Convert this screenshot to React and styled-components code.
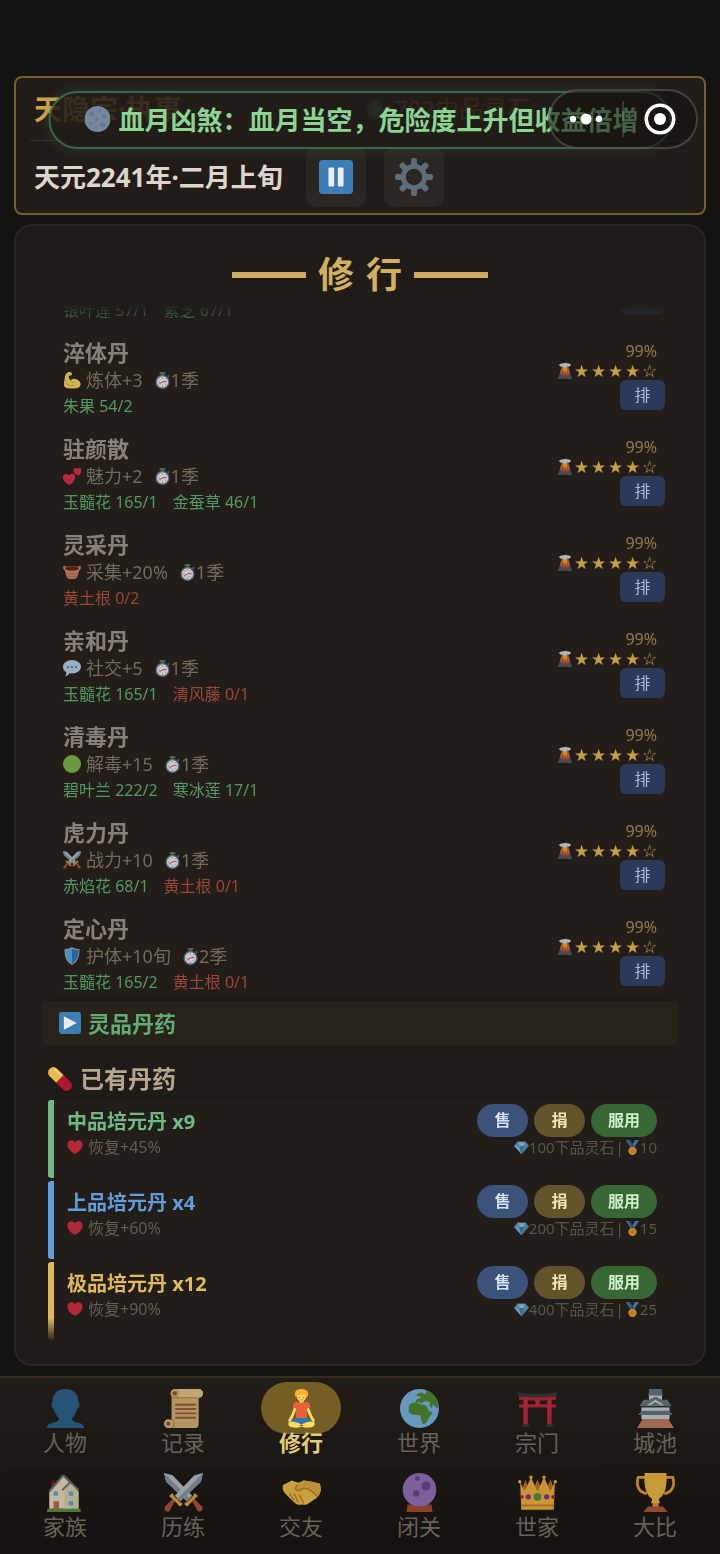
import React, { useLayoutEffect, useRef } from 'react';
import styled, { createGlobalStyle, css } from 'styled-components';

const GlobalStyle = createGlobalStyle`
  *, *::before, *::after { box-sizing: border-box; }
  html, body { margin: 0; background: #151311; }
  body, button {
    font-family: "Noto Sans", "Noto Sans CJK SC", sans-serif;
  }
  button { margin: 0; padding: 0; border: 0; cursor: pointer; }
  h1, h2, h3, p, ul { margin: 0; padding: 0; font-weight: inherit; }
  ul { list-style: none; }
`;

/* ---------- icons ---------- */

const Svg = styled.svg`
  display: block;
  flex: none;
  width: ${(p) => p.$size}px;
  height: ${(p) => p.$size}px;
  opacity: ${(p) => p.$dim || 1};
`;

const drawings = {
  moon: (
    <>
      <circle cx="18" cy="18" r="18" fill="#7688a0" />
      <g fill="#66788f">
        <circle cx="10" cy="11" r="3.5" /><circle cx="21" cy="7" r="2" /><circle cx="27" cy="14" r="3" />
        <circle cx="17" cy="19" r="2.6" /><circle cx="9" cy="24" r="2.2" /><circle cx="25" cy="26" r="3.6" /><circle cx="16" cy="30" r="1.8" />
      </g>
    </>
  ),
  gem: (
    <>
      <path d="M18 1c5 5 14 11 14 20a14 14 0 0 1-28 0C4 12 13 6 18 1z" fill="#2f7a4c" />
      <path d="M18 7l8 13-8 11-8-11z" fill="#4da56c" />
    </>
  ),
  pause: (
    <>
      <rect width="36" height="36" rx="4" fill="#3b7fb6" />
      <rect x="10" y="8" width="6" height="20" rx="1" fill="#ececec" />
      <rect x="20" y="8" width="6" height="20" rx="1" fill="#ececec" />
    </>
  ),
  play: (
    <>
      <rect width="36" height="36" rx="4" fill="#3b7fb6" />
      <path d="M8 7l21 11L8 29z" fill="#ececec" />
    </>
  ),
  gear: (
    <g fill="#5d6d79">
      <path fillRule="evenodd" d="M18 5.5a12.5 12.5 0 1 0 0 25 12.5 12.5 0 0 0 0-25zm0 4.700a7.800 7.800 0 1 1 0 15.600 7.800 7.800 0 0 1 0-15.600z" />
      {[0, 45, 90, 135, 180, 225, 270, 315].map((a) => (
        <rect key={a} x="15.200" y="0" width="5.600" height="8" rx="2" transform={`rotate(${a} 18 18)`} />
      ))}
    </g>
  ),
  muscle: (
    <>
      <path d="M3 18C4 9 6 3 12 2c4-.5 7 2 6 5-1 2-4 3-6 2-1 3 0 7 3 10 3-4 8-5 13-2 5 2 8 7 7 11-1 5-6 7-13 7-8 0-17 0-19-4C1 28 2 23 3 18z" fill="#ffdc5d" />
      <path d="M15 19c2 3 4 4 7 4M7 25c4 4 9 5 14 4" fill="none" stroke="#d99e35" strokeWidth="2" strokeLinecap="round" />
    </>
  ),
  hearts: (
    <g fill="#dd2e44">
      <path d="M13 36C4 32-1 26 0 19c1-6 8-7 12-2 3-5 11-5 12 1 1 7-4 14-11 18z" />
      <path d="M31 17c-6-2-11-6-10-11 1-5 6-5 8-2 2-4 8-3 8 2 0 4-2 8-6 11z" />
    </g>
  ),
  basket: (
    <>
      <path d="M3 13C-1 9 1 5 5 7M33 13c4-4 2-8-2-6" stroke="#c1694f" strokeWidth="2.500" fill="none" />
      <path d="M3 13h30l-4 14c-1 4-4 5-11 5S8 31 7 27z" fill="#d9866a" />
      <path d="M2 8c8-2 24-2 32 0v6c-7 5-25 5-32 0z" fill="#d9866a" />
      <ellipse cx="18" cy="11" rx="14" ry="4.500" fill="#662113" />
      <path d="M5 20c8 3 18 3 26 0M7 26c7 3 15 3 22 0" stroke="#b0644c" strokeWidth="1.500" fill="none" />
    </>
  ),
  bubble: (
    <>
      <path d="M18 2c10 0 18 6 18 13.500S28 29 18 29c-2 0-4 0-5-.5C11 32 7 34 4 35c2-3 3-6 2-9-4-2-6-6-6-10.500C0 8 8 2 18 2z" fill="#b4d5ee" />
      <g fill="#3b7395"><circle cx="10" cy="16" r="2.200" /><circle cx="18" cy="16" r="2.200" /><circle cx="26" cy="16" r="2.200" /></g>
    </>
  ),
  green: <circle cx="18" cy="18" r="18" fill="#7cb74e" />,
  swords: (
    <>
      {['', 'matrix(-1 0 0 1 36 0)'].map((t) => (
        <g key={t} transform={t || undefined}>
          <path d="M0 0l8 2 18 19-5 5L2 8z" fill="#b8c4cf" />
          <path d="M0 0l24 24-3 2L2 8z" fill="#8899a6" />
          <path d="M26 26l2-2 7 7c2 3-2 6-4 4z" fill="#a9573a" />
          <path d="M20 30c-2-1-1-3 1-3l6-6c0-2 2-3 3-1 2 1 1 2-1 3l-6 6c0 2-2 2-3 1z" fill="#f0a03a" />
        </g>
      ))}
    </>
  ),
  shield: (
    <>
      <path d="M18 0c5 3 10 4 15 4 0 14-2 25-15 32C5 29 3 18 3 4c5 0 10-1 15-4z" fill="#98aab6" />
      <path d="M18 3v30C7 26 5 18 5 6c5 0 9-1 13-3z" fill="#55acee" />
      <path d="M18 3v30c11-7 13-15 13-27-5 0-9-1-13-3z" fill="#2b78b8" />
    </>
  ),
  watch: (
    <>
      <rect x="12" y="0" width="12" height="4" rx="1" fill="#557385" />
      <rect x="15" y="3" width="6" height="4" fill="#66757f" />
      <path d="M29 7l3 3" stroke="#557385" strokeWidth="4" />
      <circle cx="18" cy="21" r="15" fill="#66757f" />
      <circle cx="18" cy="21" r="12" fill="#f5f8fa" />
      <path d="M18 11v3M18 28v3M8 21h3M25 21h3M11 14l2 2M25 14l-2 2M11 28l2-2M25 28l-2-2" stroke="#66757f" strokeWidth="1.500" />
      <path d="M11 25l7-4 7-1" stroke="#dd2e44" strokeWidth="2" fill="none" />
    </>
  ),
  volcano: (
    <>
      <path d="M11 8h14l9 28H2z" fill="#57505c" />
      <path d="M11 8h14l4 13-3 8-2-8-1 10-5-8-5 8-1-10-3 7-2-7z" fill="#d8652f" />
      <path d="M14 8h8l1 12-3-3-1 5-2-6-3 4z" fill="#ffac33" />
      <path d="M5 4c1-3 5-3 8-3 3-1 8-1 11 0 3 0 6 0 7 3 0 3-3 5-6 4-4 2-10 2-14 0-3 1-6-1-6-4z" fill="#d6dde2" />
    </>
  ),
  pill: (
    <g transform="rotate(45 18 18)">
      <path d="M18 10H4a8 8 0 0 0 0 16h14z" fill="#ffcc4d" />
      <path d="M18 10h14a8 8 0 0 1 0 16H18z" fill="#be1931" />
      <path d="M2 14c3-1 8-1 13-1" stroke="#ffe8b6" strokeWidth="2" fill="none" />
    </g>
  ),
  heart: <path d="M18 34C8 27 0 20 1 11 2 2 14 0 18 8c4-8 16-6 17 3 1 9-7 16-17 23z" fill="#d92c42" />,
  diamond: (
    <>
      <path d="M8 4h20l8 10-18 20L0 14z" fill="#5ba8dc" />
      <path d="M8 4l4 10h12l4-10zM0 14h12l6 20z" fill="#8ccaf7" />
      <path d="M12 14h12l-6 20z" fill="#3f8cc8" />
      <path d="M12 14L18 4l6 10z" fill="#bddff6" />
    </>
  ),
  medal: (
    <>
      <path d="M2 0h10l9 15-6 4zM34 0H24l-9 15 6 4z" fill="#428fc7" />
      <path d="M7 0h5l8 14-3 3z" fill="#245d86" />
      <circle cx="18" cy="26" r="10" fill="#ffac33" />
      <circle cx="18" cy="26" r="5" fill="#e6982b" />
    </>
  ),
  person: (
    <path d="M18 0c8 0 12 5 12 12l1 2c0 2-1 4-2 4-1 4-3 7-5 9 0 3 2 3 5 4 4 1 6 2 6 5H1c0-3 2-4 6-5 3-1 5-1 5-4-2-2-4-5-5-9-1 0-2-2-2-4l1-2C6 5 10 0 18 0z" fill="#28628e" />
  ),
  scroll: (
    <>
      <path d="M10 0h22a4 4 0 0 1 0 8v24c0 3-1 4-4 4H4V29h3V4c0-3 1-4 3-4z" fill="#dbb574" />
      <path d="M10 0h22a4 4 0 0 1 4 4 4 4 0 0 1-4 4H13c2-3 1-7-3-8z" fill="#e7c98d" />
      <circle cx="10" cy="4" r="4" fill="#d8af6a" /><circle cx="10" cy="4" r="2" fill="#914f40" />
      <circle cx="4" cy="32" r="4" fill="#e1bf80" /><circle cx="4" cy="32" r="2" fill="#914f40" />
      <path d="M8 8h23M8 28c2 2 2 6-1 8" stroke="#ad844b" strokeWidth="1" fill="none" />
      <path d="M11 14.500h18M11 18.500h18M11 22.500h18M11 26.500h18" stroke="#9d5b43" strokeWidth="1.800" strokeLinecap="round" />
    </>
  ),
  lotus: (
    <>
      <path d="M13 14c-1 5-2 9-6 15M23 14c1 5 2 9 6 15" stroke="#ffdc5d" strokeWidth="2.600" strokeLinecap="round" fill="none" />
      <path d="M16 9h4v5h-4z" fill="#f3c544" />
      <path d="M13 12c3 1 7 1 10 0 2 0 3 2 3 5l-3 1v9H13v-9l-3-1c0-3 1-5 3-5z" fill="#e9603f" />
      <path d="M12 27h12l4 3-4 4-6-2-6 2-4-4z" fill="#2b78b8" />
      <path d="M8 30c4 0 7 1 12 4-3 2-8 2-12 1-3-1-3-5 0-5zM28 30c-4 0-7 1-12 4 3 2 8 2 12 1 3-1 3-5 0-5z" fill="#ffdc5d" />
      <ellipse cx="18" cy="6" rx="4.500" ry="5.500" fill="#ffdc5d" />
      <path d="M12 6c-1-4 2-6 6-6s7 2 6 6l-1 2c-1-3-3-3-5-3s-4 0-5 3z" fill="#ffac33" />
      <path d="M15 7.500c.5.600 1.500.6 2 0M19 7.500c.5.600 1.500.6 2 0M16.500 9.500c1 .8 2 .8 3 0" stroke="#a0601e" strokeWidth=".8" fill="none" />
    </>
  ),
  globe: (
    <>
      <circle cx="18" cy="18" r="18" fill="#78b9e9" />
      <path d="M24 1c6 2 10 7 11 12 1 3 0 5-1 5l-3-4-2 4-2-3 1-3-5-1-3 2-4-1-2 1 1-3 4-2-1-2 3-2 3 1z" fill="#4c8a2c" />
      <path d="M9 14c3-2 7-2 9 0l6 1 3 6h3c-1 4-4 5-4 7-1 3-3 5-5 4-2-3-1-6-3-8-4 0-9 0-10-4 0-2 0-5 1-6z" fill="#4c8a2c" />
      <path d="M15 5l4-2 3 1-2 2-4 1z" fill="#4c8a2c" />
    </>
  ),
  torii: (
    <>
      <path d="M0 3c10 2 26 2 36 0l-1 5c-10 2-24 2-34 0z" fill="#31373d" />
      <path d="M1 7c10 1 24 1 34 0v3c-10 1-24 1-34 0zM1 14h34v3H1z" fill="#be2138" />
      <path d="M5 9h4v25H5zM27 9h4v25h-4zM16 9h4v7h-4z" fill="#c92640" />
      <path d="M4 32h6v3H4zM26 32h6v3h-6z" fill="#31373d" />
    </>
  ),
  castle: (
    <>
      <path d="M6 28h24l5 8H1z" fill="#c07d65" />
      <path d="M5 17h26v11H5z" fill="#ccd6dd" />
      <path d="M12 3h12v10H12z" fill="#ccd6dd" />
      <path d="M12 0h12v3l1 3H11l1-3zM5 20h26l3 4H2zM7 10h5l6-3 6 3h5l4 6H3z" fill="#66757f" />
      <path d="M10 15l8-5 8 5z" fill="#ccd6dd" />
      <path d="M13 15l5-3 5 3z" fill="#66757f" />
    </>
  ),
  house: (
    <>
      <path d="M5 7h3v9H5z" fill="#a0041e" />
      <path d="M3 18L16 3l14 15v15H3z" fill="#efe3c1" />
      <path d="M16 2l14 14M16 2L3 17M22 9l-7 7" stroke="#66757f" strokeWidth="2" fill="none" />
      <path d="M17 15l6-5 7 7v16H17z" fill="#e0d3ae" />
      <path d="M7 17h4v4H7zM21 17h4v4h-4zM21 26h4v4h-4z" fill="#55acee" />
      <path d="M7 26h5v7H7z" fill="#c1694f" />
      <path d="M1 33h31v3H1z" fill="#5c913b" />
    </>
  ),
  handshake: (
    <>
      <path d="M1 11l8-4 6 2 5-2 8 1 7 2c2 6 0 10-3 13l-6 4c-2 2-5 3-7 2-3 1-6 0-8-2L3 19c-2-2-3-5-2-8z" fill="#f4c44b" />
      <path d="M14 11l6-4 8 1 7 2c1 5 1 9-2 12l-8-7-6-1-4 2c-3 0-3-3-1-5z" fill="#e8b13f" />
      <path d="M14 11c-3 3-1 6 2 5l4-2 5 1 8 7M7 19l4 6M11 19l4 8M16 20l4 8" stroke="#bd7b26" strokeWidth="1.200" fill="none" />
    </>
  ),
  crystal: (
    <>
      <path d="M7 29h22l1 7H6z" fill="#a84c33" />
      <circle cx="18" cy="15.500" r="15.500" fill="#9673bd" />
      <g fill="#664a91"><circle cx="16" cy="5" r="2.300" /><circle cx="24" cy="12" r="4.200" /><circle cx="15" cy="19" r="3" /></g>
    </>
  ),
  crown: (
    <>
      <path d="M4 14l3-8 2 7 3-7 3 7 3-7 3 7 3-7 3 7 3-7 3 8v4H4z" fill="#c8702a" />
      <path d="M2 8l4 9L12 4l6 13 6-13 6 13 4-9-1 26H3z" fill="#f1b73c" />
      <path d="M3 29h30v2H3z" fill="#cf8028" />
      <g fill="#f1b73c"><circle cx="12" cy="4" r="1.600" /><circle cx="24" cy="4" r="1.600" /><circle cx="1.600" cy="8" r="1.600" /><circle cx="34.400" cy="8" r="1.600" /></g>
      <circle cx="18" cy="22" r="3.600" fill="#5c913b" /><circle cx="9.500" cy="22" r="2.500" fill="#8a2fa0" /><circle cx="26.500" cy="22" r="2.500" fill="#8a2fa0" />
      <circle cx="3.500" cy="22" r="1.800" fill="#be1931" /><circle cx="32.500" cy="22" r="1.800" fill="#be1931" />
    </>
  ),
  trophy: (
    <>
      <path d="M9 4H2c-2 7 0 14 8 15M27 4h7c2 7 0 14-8 15" fill="none" stroke="#ec9f2e" strokeWidth="2.500" />
      <path d="M16 20h4l1 12h-6z" fill="#e8972c" />
      <path d="M8 0h20c1 12-1 20-7 24l1 4h-8l1-4C9 20 7 12 8 0z" fill="#f5bd42" />
      <path d="M11 31h14l4 5H7z" fill="#b7553b" />
    </>
  ),
};

const Icon = ({ name, size, dim }) => (
  <Svg viewBox="0 0 36 36" $size={size} $dim={dim} aria-hidden="true">{drawings[name]}</Svg>
);

/* ---------- frame ---------- */

const Screen = styled.div`
  position: relative;
  display: flex;
  flex-direction: column;
  height: 100vh;
  padding-top: 76px;
  background: #151311;
`;

const StatusCard = styled.header`
  margin: 0 14px 9px;
  padding: 0 14px 6px;
  border: 2px solid #735d2c;
  border-radius: 8px;
  background: #221c19;
`;

const StatusRow = styled.div`
  display: flex;
  align-items: center;
  padding: 0 4px;
`;

const SectRow = styled(StatusRow)`
  height: 63px;
  gap: 182px;
  border-bottom: 1px solid #35302a;
`;

const SectName = styled.h1`
  font-size: 28px;
  font-weight: 700;
  line-height: 36px;
  color: #cfa443;
`;

const Funds = styled.p`
  display: flex;
  align-items: center;
  gap: 8px;
  font-size: 24px;
  line-height: 36px;
  color: #b8603f;
`;

const DateRow = styled(StatusRow)`
  gap: 18px;
  padding-top: 6px;
`;

const DateText = styled.p`
  margin-right: 5px;
  font-size: 26px;
  font-weight: 700;
  line-height: 36px;
  color: #ded6cd;
`;

const ToolButton = styled.button`
  display: grid;
  place-items: center;
  width: 60px;
  height: 60px;
  border-radius: 10px;
  background: #2b2622;
`;

const Toast = styled.div`
  position: absolute;
  top: 91px;
  left: 50%;
  transform: translateX(-50%);
  display: flex;
  align-items: center;
  gap: 8px;
  height: 58px;
  padding: 0 31px 2px 34px;
  border: 2px solid #3c6648;
  border-radius: 29px;
  background: rgba(34, 29, 24, 0.88);
  box-shadow: 0 0 14px rgba(60, 120, 70, 0.3);
  font-size: 26px;
  font-weight: 700;
  white-space: nowrap;
  color: #8ad592;
`;

const Capsule = styled.div`
  position: absolute;
  top: 89px;
  right: 22px;
  display: flex;
  align-items: center;
  width: 150px;
  height: 60px;
  border: 2px solid rgba(255, 255, 255, 0.18);
  border-radius: 30px;
  background: rgba(20, 16, 14, 0.6);
`;

const CapsuleButton = styled.button`
  flex: 1;
  display: grid;
  place-items: center;
  height: 36px;
  background: transparent;
  & + & { border-left: 2px solid rgba(255, 255, 255, 0.15); }
`;

/* ---------- cultivation panel ---------- */

const Panel = styled.main`
  flex: 1;
  min-height: 0;
  display: flex;
  flex-direction: column;
  margin: 0 14px 10px;
  padding: 22px 25px 22px;
  border: 2px solid #292522;
  border-radius: 18px;
  background: #1f1b18;
`;

const Title = styled.h2`
  display: flex;
  align-items: center;
  justify-content: center;
  gap: 12px;
  padding-bottom: 2px;
  font-size: 36px;
  font-weight: 700;
  line-height: 54px;
  color: #d3b060;
  &::before, &::after {
    content: "";
    width: 74px;
    height: 6px;
    background: #d0ac61;
  }
`;

const Scroller = styled.div`
  flex: 1;
  min-height: 0;
  padding-bottom: 24px;
  overflow-y: auto;
  scrollbar-width: none;
  mask-image: linear-gradient(transparent, #000 24px, #000 calc(100% - 24px), transparent);
`;

const RowList = styled.ul`
  display: flex;
  flex-direction: column;
  gap: 3px;
  padding: 0 7px;
`;

const RecipeRow = styled.li`
  display: flex;
  justify-content: space-between;
  height: 93px;
  padding: 10px 7px 0 15px;
  border-radius: 6px;
  background: #221d19;
`;

const RecipeName = styled.h3`
  font-size: 22px;
  font-weight: 700;
  line-height: 30px;
  color: #8b8075;
`;

const Effect = styled.p`
  display: flex;
  align-items: center;
  gap: 5px;
  font-size: 18px;
  line-height: 26px;
  color: #746a59;
`;

const Duration = styled.span`
  display: flex;
  align-items: center;
  margin-left: 6px;
`;

const Herbs = styled.p`
  display: flex;
  gap: 15px;
  font-size: 16px;
  line-height: 26px;
`;

const Herb = styled.span`
  color: ${(p) => (p.$lacking ? '#994638' : '#539a62')};
`;

const RecipeSide = styled.div`
  display: flex;
  flex-direction: column;
  align-items: flex-end;
  padding-top: 3px;
`;

const Chance = styled.p`
  padding-right: 8px;
  font-size: 16px;
  line-height: 22px;
  color: #8e7c4b;
`;

const Rating = styled.p`
  display: flex;
  align-items: center;
  height: 18px;
  padding-right: 7px;
  font: 17px/18px "DejaVu Sans", sans-serif;
  color: #c5a043;
`;

const Star = styled.span`
  width: 17px;
  text-align: center;
`;

const QueueButton = styled.button`
  width: 45px;
  height: 30px;
  padding-bottom: 1px;
  border-radius: 6px;
  background: #2b3a58;
  font-size: 16px;
  line-height: 28px;
  color: #a9bfdf;
`;

const GradeToggle = styled.button`
  display: flex;
  align-items: center;
  gap: 7px;
  width: 100%;
  height: 44px;
  margin-top: 5px;
  padding: 0 18px;
  border-radius: 6px;
  background: #27221a;
  font-size: 22px;
  font-weight: 700;
  line-height: 30px;
  color: #61ab74;
`;

const OwnedTitle = styled.h2`
  display: flex;
  align-items: center;
  gap: 8px;
  margin-top: 14px;
  padding: 0 7px 1px;
  font-size: 24px;
  font-weight: 700;
  line-height: 40px;
  color: #b5a68c;
`;

const OwnedRow = styled.li`
  display: flex;
  justify-content: space-between;
  height: 78px;
  padding: 4px 15px 0 13px;
  border-left: 6px solid ${(p) => p.$tone};
  border-radius: 3px;
  background: #221d19;
`;

const OwnedInfo = styled.div`
  padding-top: 6px;
`;

const OwnedName = styled.h3`
  font-size: 20px;
  font-weight: 700;
  line-height: 24px;
  color: ${(p) => p.$tone};
`;

const OwnedEffect = styled(Effect)`
  font-size: 16px;
  color: #655c52;
`;

const OwnedSide = styled.div`
  display: flex;
  flex-direction: column;
  align-items: flex-end;
`;

const Actions = styled.div`
  display: flex;
  gap: 6px;
`;

const actionTones = {
  sell: css`background: #3b5279; color: #d4e1f8;`,
  donate: css`background: #63532b; color: #f2e4bc;`,
  use: css`background: #366735; color: #d3efca;`,
};

const ActionButton = styled.button`
  min-width: 51px;
  height: 33px;
  padding: 0 17px 1px;
  border-radius: 17px;
  font-size: 16px;
  font-weight: 700;
  line-height: 30px;
  ${(p) => actionTones[p.$kind]}
`;

const Price = styled.p`
  display: flex;
  align-items: center;
  font-size: 15px;
  line-height: 20px;
  color: #5c5448;
`;

const Bar = styled.span`
  padding: 0 1px;
`;

/* ---------- tab bar ---------- */

const TabBar = styled.nav`
  padding: 4px 6px 5px;
  border-top: 2px solid #3a2c1b;
  background: linear-gradient(#201c17, #15110f);
`;

const TabRow = styled.div`
  display: grid;
  grid-template-columns: repeat(6, 1fr);
`;

const Tab = styled.a`
  display: flex;
  flex-direction: column;
  align-items: center;
  padding-bottom: 15px;
  font-size: 22px;
  font-weight: ${(p) => (p.$active ? 700 : 400)};
  line-height: 16px;
  text-decoration: none;
  color: ${(p) => (p.$active ? '#e5cb74' : '#686157')};
  ${TabRow} + ${TabRow} & { border-top: 1px solid #25201a; }
  ${TabRow} + ${TabRow} &:last-child { border-color: transparent; }
`;

const TabBadge = styled.span`
  display: grid;
  place-items: center;
  width: 80px;
  height: 52px;
  border-radius: 26px;
  background: ${(p) => (p.$active ? '#755d26' : 'transparent')};
`;

/* ---------- data ---------- */

const recipes = [
  { name: '聚灵丹', icon: 'green', effect: '聚灵+10', time: '1季', herbs: [['银叶莲 57/1'], ['紫芝 67/1']] },
  { name: '淬体丹', icon: 'muscle', effect: '炼体+3', time: '1季', herbs: [['朱果 54/2']] },
  { name: '驻颜散', icon: 'hearts', effect: '魅力+2', time: '1季', herbs: [['玉髓花 165/1'], ['金蚕草 46/1']] },
  { name: '灵采丹', icon: 'basket', effect: '采集+20%', time: '1季', herbs: [['黄土根 0/2', true]] },
  { name: '亲和丹', icon: 'bubble', effect: '社交+5', time: '1季', herbs: [['玉髓花 165/1'], ['清风藤 0/1', true]] },
  { name: '清毒丹', icon: 'green', effect: '解毒+15', time: '1季', herbs: [['碧叶兰 222/2'], ['寒冰莲 17/1']] },
  { name: '虎力丹', icon: 'swords', effect: '战力+10', time: '1季', herbs: [['赤焰花 68/1'], ['黄土根 0/1', true]] },
  { name: '定心丹', icon: 'shield', effect: '护体+10旬', time: '2季', herbs: [['玉髓花 165/2'], ['黄土根 0/1', true]] },
];

const owned = [
  { name: '中品培元丹 x9', tone: '#6fb984', effect: '恢复+45%', price: 100, merit: 10 },
  { name: '上品培元丹 x4', tone: '#619dd8', effect: '恢复+60%', price: 200, merit: 15 },
  { name: '极品培元丹 x12', tone: '#e0b95a', effect: '恢复+90%', price: 400, merit: 25 },
];

const tabs = [
  [['person', '人物'], ['scroll', '记录'], ['lotus', '修行'], ['globe', '世界'], ['torii', '宗门'], ['castle', '城池']],
  [['house', '家族'], ['swords', '历练'], ['handshake', '交友'], ['crystal', '闭关'], ['crown', '世家'], ['trophy', '大比']],
];

const Recipe = ({ name, icon, effect, time, herbs }) => (
  <RecipeRow>
    <div>
      <RecipeName>{name}</RecipeName>
      <Effect>
        <Icon name={icon} size={18} dim={0.8} />
        {effect}
        <Duration><Icon name="watch" size={17} dim={0.8} />{time}</Duration>
      </Effect>
      <Herbs>
        {herbs.map(([text, lacking]) => <Herb key={text} $lacking={lacking}>{text}</Herb>)}
      </Herbs>
    </div>
    <RecipeSide>
      <Chance>99%</Chance>
      <Rating>
        <Icon name="volcano" size={16} dim={0.8} />
        {['★', '★', '★', '★', '☆'].map((s, i) => <Star key={i}>{s}</Star>)}
      </Rating>
      <QueueButton type="button">排</QueueButton>
    </RecipeSide>
  </RecipeRow>
);

const Owned = ({ name, tone, effect, price, merit }) => (
  <OwnedRow $tone={tone}>
    <OwnedInfo>
      <OwnedName $tone={tone}>{name}</OwnedName>
      <OwnedEffect><Icon name="heart" size={16} dim={0.8} />{effect}</OwnedEffect>
    </OwnedInfo>
    <OwnedSide>
      <Actions>
        <ActionButton type="button" $kind="sell">售</ActionButton>
        <ActionButton type="button" $kind="donate">捐</ActionButton>
        <ActionButton type="button" $kind="use">服用</ActionButton>
      </Actions>
      <Price>
        <Icon name="diamond" size={15} dim={0.7} />{price}下品灵石<Bar>|</Bar>
        <Icon name="medal" size={15} dim={0.75} />{merit}
      </Price>
    </OwnedSide>
  </OwnedRow>
);

export default function App() {
  const scroller = useRef(null);

  useLayoutEffect(() => {
    scroller.current.scrollTop = 73;
  }, []);

  return (
    <>
      <GlobalStyle />
      <Screen>
        <StatusCard>
          <SectRow>
            <SectName>天隐宗·执事</SectName>
            <Funds><Icon name="gem" size={22} />702中品灵石</Funds>
          </SectRow>
          <DateRow>
            <DateText>天元2241年·二月上旬</DateText>
            <ToolButton type="button" aria-label="暂停"><Icon name="pause" size={34} /></ToolButton>
            <ToolButton type="button" aria-label="设置"><Icon name="gear" size={38} /></ToolButton>
          </DateRow>
        </StatusCard>

        <Panel>
          <Title><span>修</span><span>行</span></Title>
          <Scroller ref={scroller}>
            <RowList>{recipes.map((r) => <Recipe key={r.name} {...r} />)}</RowList>
            <GradeToggle type="button"><Icon name="play" size={22} />灵品丹药</GradeToggle>
            <OwnedTitle><Icon name="pill" size={24} dim={0.9} />已有丹药</OwnedTitle>
            <RowList>{owned.map((o) => <Owned key={o.name} {...o} />)}</RowList>
          </Scroller>
        </Panel>

        <TabBar>
          {tabs.map((row, i) => (
            <TabRow key={i}>
              {row.map(([icon, label]) => {
                const active = label === '修行';
                return (
                  <Tab key={label} href="#" $active={active} aria-current={active ? 'page' : undefined}>
                    <TabBadge $active={active}><Icon name={icon} size={39} dim={active ? 1 : 0.8} /></TabBadge>
                    {label}
                  </Tab>
                );
              })}
            </TabRow>
          ))}
        </TabBar>

        <Toast role="status"><Icon name="moon" size={26} />血月凶煞：血月当空，危险度上升但收益倍增</Toast>
        <Capsule>
          <CapsuleButton type="button" aria-label="更多">
            <Svg viewBox="0 0 36 36" $size={36}>
              <g fill="#fff"><circle cx="5" cy="18" r="3.200" /><circle cx="18" cy="18" r="5.500" /><circle cx="31" cy="18" r="3.200" /></g>
            </Svg>
          </CapsuleButton>
          <CapsuleButton type="button" aria-label="关闭">
            <Svg viewBox="0 0 36 36" $size={36}>
              <circle cx="18" cy="18" r="13.700" fill="none" stroke="#fff" strokeWidth="3.600" />
              <circle cx="18" cy="18" r="6" fill="#fff" />
            </Svg>
          </CapsuleButton>
        </Capsule>
      </Screen>
    </>
  );
}
